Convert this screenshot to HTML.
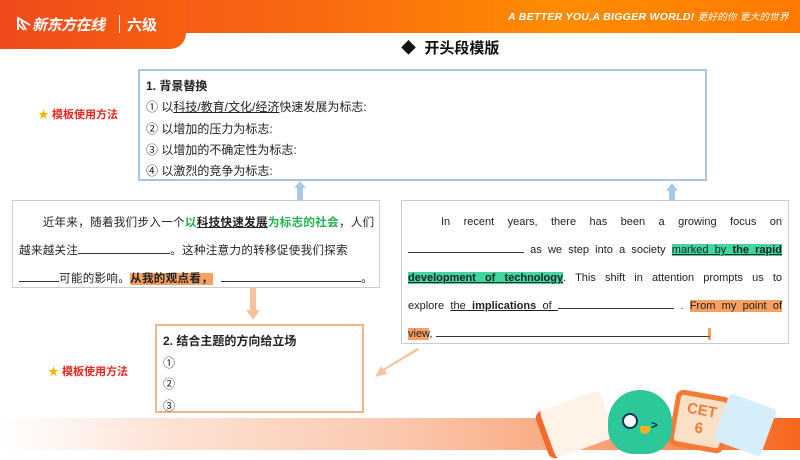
<!DOCTYPE html>
<html><head><meta charset="utf-8"><style>
*{margin:0;padding:0;box-sizing:border-box}
body{width:800px;height:450px;position:relative;overflow:hidden;background:#fff;font-family:"Liberation Sans","Noto Sans CJK SC",sans-serif;color:#222}
.abs{position:absolute}
.hdr{left:0;top:0;width:800px;height:33px;background:linear-gradient(90deg,#f04a1c 0%,#f86a10 40%,#ff8c00 70%,#ff7a00 100%)}
.hdr2{left:0;top:0;width:186px;height:49px;background:linear-gradient(90deg,#f04a1c,#f7600f);border-bottom-right-radius:16px}
.u{text-decoration:underline}
.b{font-weight:bold}
.box{border:1.5px solid #ccc;background:#fff}
.ln{display:inline-block;border-bottom:1px solid #333;height:11px;vertical-align:baseline}
.nw{white-space:nowrap}
</style></head><body>
<div class="abs hdr"></div><div class="abs hdr2"></div>
<div class="abs" style="left:16px;top:14px;color:#fff;font-size:15px;font-weight:bold;font-style:italic;letter-spacing:-0.5px">
<svg width="16" height="16" viewBox="0 0 16 16" style="vertical-align:-2px"><path d="M2 14V2l12 7M2 8l6 6M5 5l5 9" stroke="#fff" stroke-width="1.8" fill="none"/></svg>新东方在线</div>
<div class="abs" style="left:119px;top:15px;width:1px;height:18px;background:#fff"></div>
<div class="abs" style="left:127px;top:14px;color:#fff;font-size:15px;font-weight:bold">六级</div>
<div class="abs" style="left:508px;top:9px;color:#fff;font-size:10.5px;font-weight:bold;font-style:italic;letter-spacing:0.3px">A BETTER YOU,A BIGGER WORLD! <span style="font-weight:normal;font-size:9.5px">更好的你 更大的世界</span></div>
<div class="abs" style="left:401px;top:37px;font-size:15px;font-weight:bold;color:#111">◆&nbsp; 开头段模版</div>

<div class="abs" style="left:38px;top:106px;font-size:11px;font-weight:bold;color:#e8261e"><span style="color:#f5b800">★</span> 模板使用方法</div>
<div class="abs" style="left:48px;top:363px;font-size:11px;font-weight:bold;color:#e8261e"><span style="color:#f5b800">★</span> 模板使用方法</div>

<div class="abs box" style="left:138px;top:69px;width:569px;height:112px;border:2px solid #a7c4e2;padding:5px 0 0 6px;font-size:12px;line-height:21.3px">
<div class="b">1. 背景替换</div>
<div>① 以<span class="u">科技/教育/文化/经济</span>快速发展为标志:</div>
<div>② 以增加的压力为标志:</div>
<div>③ 以增加的不确定性为标志:</div>
<div>④ 以激烈的竞争为标志:</div>
</div>

<div class="abs" style="left:294px;top:181px;width:12px;height:28px"><svg width="12" height="28"><path d="M6 0L12 7H9V28H3V7H0Z" fill="#a8c8e8"/></svg></div>
<div class="abs" style="left:666px;top:183px;width:12px;height:52px"><svg width="12" height="52"><path d="M6 0L12 8H9V52H3V8H0Z" fill="#a8c8e8"/></svg></div>

<div class="abs box" style="left:12px;top:200px;width:368px;height:88px;padding:8px 0 0 6px;font-size:11.5px;line-height:28px;letter-spacing:0.35px">
<div class="nw">&emsp;&emsp;近年来，随着我们步入一个<span class="b" style="color:#22b04a">以<span class="u" style="color:#222">科技快速发展</span>为标志的社会</span>，人们</div>
<div class="nw">越来越关注<span class="ln" style="width:92px"></span>。这种注意力的转移促使我们探索</div>
<div class="nw"><span class="ln" style="width:40px"></span>可能的影响。<span class="b" style="background:#f7a062">从我的观点看，</span><span class="ln" style="width:140px;margin-left:8px"></span>。</div>
</div>

<div class="abs" style="left:246px;top:288px"><svg width="14" height="32"><path d="M4 0H10V22H14L7 32L0 22H4Z" fill="#f6c2a0"/></svg></div>
<div class="abs" style="left:373px;top:348px"><svg width="48" height="32"><path d="M46 2L12 22L14 26L2 29L8 18L10 21L44 0Z" fill="#f6c2a0"/></svg></div>

<div class="abs" style="left:155px;top:324px;width:209px;height:89px;border:2px solid #f2b489;padding:5px 0 0 6px;font-size:12px;line-height:21.5px">
<div class="b">2. 结合主题的方向给立场</div>
<div>①</div><div>②</div><div>③</div>
</div>

<div class="abs box" style="left:401px;top:200px;width:388px;height:144px;padding:7px 6px 0 6px;font-size:11px;line-height:28px;text-align:justify;text-align-last:justify">
<div>&emsp;&emsp;&emsp;In recent years, there has been a growing focus on</div>
<div><span class="ln" style="width:116px"></span> as we step into a society <span class="u" style="background:#3fd6a0">marked by <b>the rapid</b></span></div>
<div><span class="u b" style="background:#3fd6a0">development of technology</span>. This shift in attention prompts us to</div>
<div>explore <span class="u">the <b>implications</b> of </span><span class="ln" style="width:116px"></span> . <span style="background:#f7a062">From my point of</span></div>
<div style="text-align-last:left"><span style="background:#f7a062">view</span>, <span class="ln" style="width:272px"></span><span style="background:#f7a062">.</span></div>
</div>

<div class="abs" style="left:0;top:418px;width:800px;height:32px;background:linear-gradient(90deg,#fff 0%,#fde3d6 20%,#fbc7ad 50%,#f99a6a 80%,#f6661e 100%)"></div>
<div class="abs" style="left:540px;top:400px;width:70px;height:50px;background:#fff3e8;border-left:6px solid #f26a2c;border-radius:8px;transform:rotate(-20deg)"></div>
<div class="abs" style="left:672px;top:393px;width:56px;height:57px;background:#fbe0c8;border:5px solid #f27a34;border-radius:8px;transform:rotate(10deg);color:#f27a34;font-weight:bold;font-size:15px;text-align:center;line-height:18px;padding-top:4px">CET<br>6</div>
<div class="abs" style="left:720px;top:400px;width:50px;height:50px;background:#d6eefa;transform:rotate(20deg);border-radius:4px"></div>
<div class="abs" style="left:608px;top:390px;width:64px;height:64px;background:#2cc89a;border-radius:50% 50% 40% 40%"></div>
<div class="abs" style="left:622px;top:413px;width:16px;height:16px;background:#fff;border:2px solid #135;border-radius:50%"></div>
<div class="abs" style="left:651px;top:418px;font-size:12px;color:#135;font-weight:bold">&gt;</div>
<div class="abs" style="left:640px;top:426px;width:10px;height:8px;background:#ffb020;border-radius:2px 2px 8px 8px"></div>
</body></html>
